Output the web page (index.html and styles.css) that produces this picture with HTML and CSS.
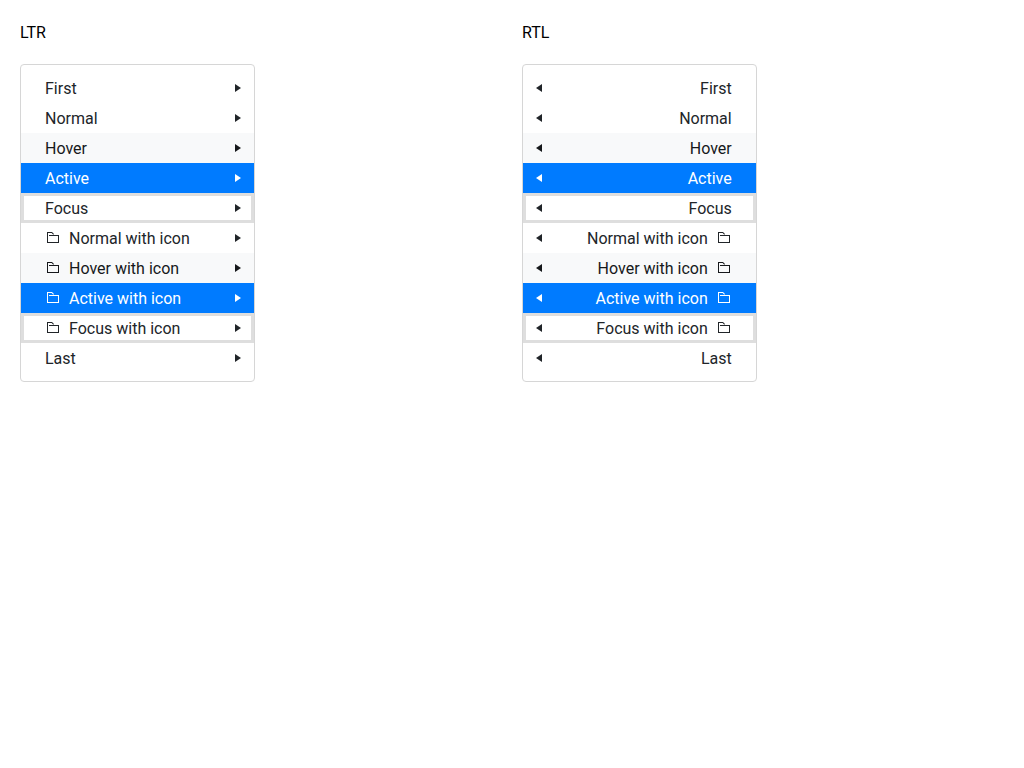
FILE: index.html
```html
<!DOCTYPE html>
<html lang="en">
<head>
<meta charset="utf-8">
<title>Menu items</title>
<link rel="stylesheet" href="styles.css">
</head>
<body>
<svg class="defs" aria-hidden="true">
  <symbol id="arrow" viewBox="0 0 16 16"><path d="M5 4v8l6-4z"/></symbol>
  <symbol id="folder" viewBox="0 0 16 16"><path d="M2 2h5l2 2-.7.700L6.600 3H3v9h10V6H4V5h10v8H2z"/></symbol>
</svg>
<main class="page">
  <section class="column">
    <h2 class="title">LTR</h2>
    <ul class="menu" role="menu">
      <li role="none"><button class="item" role="menuitem"><span class="text">First</span><svg class="arrow"><use href="#arrow"/></svg></button></li>
      <li role="none"><button class="item" role="menuitem"><span class="text">Normal</span><svg class="arrow"><use href="#arrow"/></svg></button></li>
      <li role="none"><button class="item hover" role="menuitem"><span class="text">Hover</span><svg class="arrow"><use href="#arrow"/></svg></button></li>
      <li role="none"><button class="item active" role="menuitem"><span class="text">Active</span><svg class="arrow"><use href="#arrow"/></svg></button></li>
      <li role="none"><button class="item focus" role="menuitem"><span class="text">Focus</span><svg class="arrow"><use href="#arrow"/></svg></button></li>
      <li role="none"><button class="item" role="menuitem"><svg class="icon"><use href="#folder"/></svg><span class="text">Normal with icon</span><svg class="arrow"><use href="#arrow"/></svg></button></li>
      <li role="none"><button class="item hover" role="menuitem"><svg class="icon"><use href="#folder"/></svg><span class="text">Hover with icon</span><svg class="arrow"><use href="#arrow"/></svg></button></li>
      <li role="none"><button class="item active" role="menuitem"><svg class="icon"><use href="#folder"/></svg><span class="text">Active with icon</span><svg class="arrow"><use href="#arrow"/></svg></button></li>
      <li role="none"><button class="item focus" role="menuitem"><svg class="icon"><use href="#folder"/></svg><span class="text">Focus with icon</span><svg class="arrow"><use href="#arrow"/></svg></button></li>
      <li role="none"><button class="item" role="menuitem"><span class="text">Last</span><svg class="arrow"><use href="#arrow"/></svg></button></li>
    </ul>
  </section>
  <section class="column">
    <h2 class="title">RTL</h2>
    <ul class="menu" role="menu" dir="rtl">
      <li role="none"><button class="item" role="menuitem"><span class="text">First</span><svg class="arrow"><use href="#arrow"/></svg></button></li>
      <li role="none"><button class="item" role="menuitem"><span class="text">Normal</span><svg class="arrow"><use href="#arrow"/></svg></button></li>
      <li role="none"><button class="item hover" role="menuitem"><span class="text">Hover</span><svg class="arrow"><use href="#arrow"/></svg></button></li>
      <li role="none"><button class="item active" role="menuitem"><span class="text">Active</span><svg class="arrow"><use href="#arrow"/></svg></button></li>
      <li role="none"><button class="item focus" role="menuitem"><span class="text">Focus</span><svg class="arrow"><use href="#arrow"/></svg></button></li>
      <li role="none"><button class="item" role="menuitem"><svg class="icon"><use href="#folder"/></svg><span class="text">Normal with icon</span><svg class="arrow"><use href="#arrow"/></svg></button></li>
      <li role="none"><button class="item hover" role="menuitem"><svg class="icon"><use href="#folder"/></svg><span class="text">Hover with icon</span><svg class="arrow"><use href="#arrow"/></svg></button></li>
      <li role="none"><button class="item active" role="menuitem"><svg class="icon"><use href="#folder"/></svg><span class="text">Active with icon</span><svg class="arrow"><use href="#arrow"/></svg></button></li>
      <li role="none"><button class="item focus" role="menuitem"><svg class="icon"><use href="#folder"/></svg><span class="text">Focus with icon</span><svg class="arrow"><use href="#arrow"/></svg></button></li>
      <li role="none"><button class="item" role="menuitem"><span class="text">Last</span><svg class="arrow"><use href="#arrow"/></svg></button></li>
    </ul>
  </section>
</main>
</body>
</html>
```
FILE: styles.css
```css
* { box-sizing: border-box; }
body {
  margin: 0;
  background: #fff;
  color: #000;
  font: 16px/24px Roboto, sans-serif;
}
.defs { display: none; }
.page {
  display: grid;
  grid-template-columns: 1fr 1fr;
  gap: 20px;
  padding: 20px;
}
.title {
  margin: 0 0 18px;
  font-size: 16px;
  font-weight: 400;
  line-height: 26px;
}
.menu {
  width: max-content;
  margin: 0;
  padding: 8px 0;
  list-style: none;
  border: 1px solid #d6d6d6;
  border-radius: 4px;
}
.item {
  display: flex;
  align-items: center;
  gap: 8px;
  width: 100%;
  padding-block: 2px;
  padding-inline: 24px 8px;
  border: 0;
  background: #fff;
  color: #212529;
  font: inherit;
  text-align: start;
}
.text {
  flex: 1;
  padding-top: 2px;
}
.icon, .arrow {
  flex: none;
  width: 16px;
  height: 16px;
  fill: currentColor;
}
.arrow { margin-inline-start: 32px; }
[dir="rtl"] .arrow { transform: scaleX(-1); }
.hover { background: #f8f9fa; color: #16181b; }
.active { background: #007bff; color: #fff; }
.focus { box-shadow: inset 0 0 0 3px #dedede; }
```
